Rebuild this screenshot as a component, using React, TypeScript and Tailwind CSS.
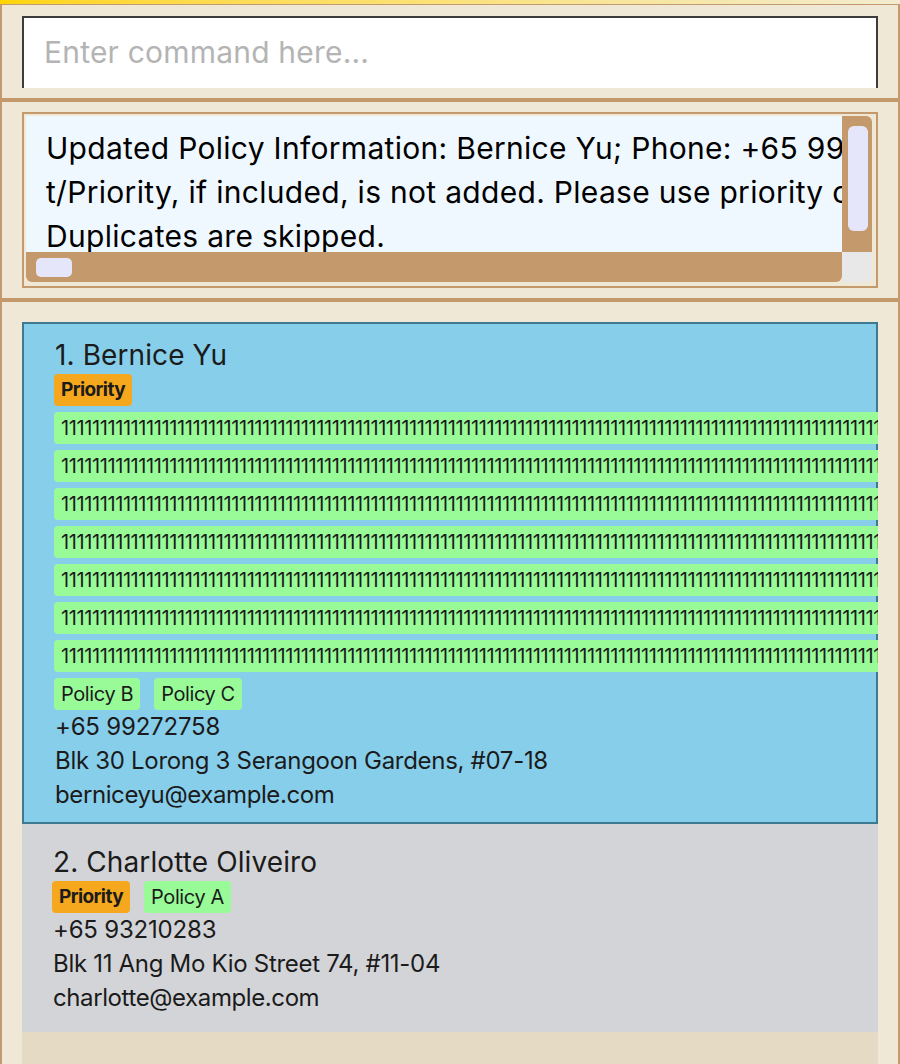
import React from "react";

const ONES = "1".repeat(120);

function Tag({ label, kind }: { label: string; kind: "priority" | "policy" }) {
  return (
    <span
      className={
        kind === "priority"
          ? "shrink-0 h-[32px] px-[7px] rounded-[4px] flex items-center bg-[#f5a81d] text-[19px] font-bold tracking-[-0.6px] whitespace-nowrap"
          : "shrink-0 h-[32px] px-[7px] rounded-[4px] flex items-center bg-[#98fb98] text-[20px] tracking-[-0.4px] whitespace-nowrap"
      }
    >
      {label}
    </span>
  );
}

interface Person {
  name: string;
  tags: Array<{ label: string; kind: "priority" | "policy" }>;
  phone: string;
  address: string;
  email: string;
}

const people: Person[] = [
  {
    name: "1. Bernice Yu",
    tags: [
      { label: "Priority", kind: "priority" },
      ...Array.from({ length: 7 }, () => ({ label: ONES, kind: "policy" as const })),
      { label: "Policy B", kind: "policy" },
      { label: "Policy C", kind: "policy" },
    ],
    phone: "+65 99272758",
    address: "Blk 30 Lorong 3 Serangoon Gardens, #07-18",
    email: "berniceyu@example.com",
  },
  {
    name: "2. Charlotte Oliveiro",
    tags: [
      { label: "Priority", kind: "priority" },
      { label: "Policy A", kind: "policy" },
    ],
    phone: "+65 93210283",
    address: "Blk 11 Ang Mo Kio Street 74, #11-04",
    email: "charlotte@example.com",
  },
];

function PersonCard({ p, selected }: { p: Person; selected: boolean }) {
  return (
    <div
      className={
        selected
          ? "border-2 border-[#3d7a92] bg-[#87ceeb] pl-[31px] pt-[14px] pb-[10px] text-[#1b1b1b]"
          : "bg-[#d3d4d8] pl-[31px] pt-[21px] pb-[17px] text-[#1b1b1b]"
      }
    >
      <div className="text-[28px] leading-[34px] tracking-[0.1px]">{p.name}</div>
      <div className="flex flex-wrap gap-x-[14px] gap-y-[6px] mt-[2px] -ml-[1px]">
        {p.tags.map((t, i) => (
          <Tag key={i} label={t.label} kind={t.kind} />
        ))}
      </div>
      <div className="text-[24px] leading-[34px] tracking-[-0.2px]">{p.phone}</div>
      <div className="text-[24px] leading-[34px] tracking-[-0.3px]">{p.address}</div>
      <div className="text-[24px] leading-[34px] tracking-[-0.4px]">{p.email}</div>
    </div>
  );
}

export default function App() {
  return (
    <div className="w-[900px] h-[1064px] overflow-hidden bg-[#f0e8d6] font-['Inter',sans-serif]">
      <div className="h-[4px] bg-linear-to-r from-[#ffd500] via-[#fbe27a] to-[#f3ebcf]" />
      <div className="h-[1060px] flex flex-col border-t border-l-2 border-r-2 border-[#c4996b]">
        {/* command box */}
        <div className="pt-[11px] pb-[10px] px-[20px]">
          <div className="h-[72px] bg-white border-2 border-b-0 border-[#3c3c3c] flex items-center pl-[20px] pb-[2px]">
            <span className="text-[30px] text-[#b4b4b4] tracking-[0.2px]">Enter command here...</span>
          </div>
        </div>
        <div className="h-[4px] bg-[#c4996b]" />

        {/* result display */}
        <div className="py-[10px] px-[20px]">
          <div className="h-[176px] border-2 border-[#c4996b] pl-[2px] pr-[4px] pt-[2px] pb-[4px]">
            <div className="h-full grid grid-cols-[1fr_30px] grid-rows-[136px_30px]">
              <div className="bg-[#f0f8ff] overflow-hidden pl-[20px] pt-[10px] whitespace-nowrap text-[30px] leading-[44px] text-black tracking-[0.3px]">
                <div>Updated Policy Information: Bernice Yu; Phone: +65 99272758; Email: berniceyu@example.com</div>
                <div>t/Priority, if included, is not added. Please use priority command instead.</div>
                <div>Duplicates are skipped.</div>
              </div>
              <div className="bg-[#c49a6c] rounded-tr-[6px] pl-[6px] pt-[10px]">
                <div className="w-[20px] h-[105px] rounded-[6px] bg-[#e6e6fa]" />
              </div>
              <div className="bg-[#c49a6c] rounded-b-[6px] pl-[10px] pt-[6px]">
                <div className="w-[36px] h-[19px] rounded-[5px] bg-[#e6e6fa]" />
              </div>
              <div className="bg-[#e8e8e8] rounded-br-[6px]" />
            </div>
          </div>
        </div>
        <div className="h-[4px] bg-[#c4996b]" />

        {/* person list */}
        <div className="flex-1 min-h-0 pt-[20px] px-[20px] flex flex-col">
          <div className="flex-1 bg-[#e5dac4] overflow-hidden">
            {people.map((p, i) => (
              <PersonCard key={i} p={p} selected={i === 0} />
            ))}
          </div>
        </div>
      </div>
    </div>
  );
}
